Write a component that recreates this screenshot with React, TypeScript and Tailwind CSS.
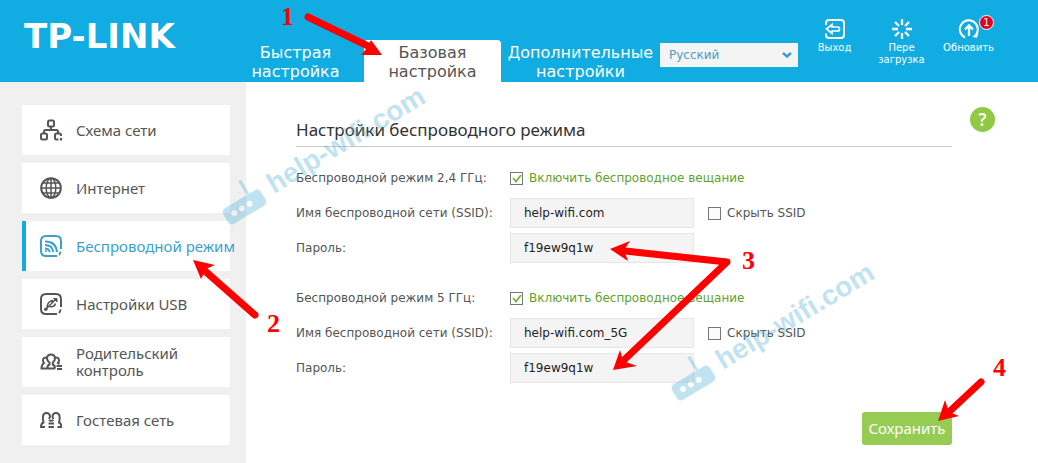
import { useState } from "react";
import type { ReactNode } from "react";

type IconProps = { children: ReactNode };

const MenuIcon = ({ children }: IconProps) => (
  <svg viewBox="0 0 22 22" className="w-[22px] h-[22px] shrink-0" fill="none" stroke="currentColor" strokeWidth="2">
    {children}
  </svg>
);

const ToolIcon = ({ children }: IconProps) => (
  <svg viewBox="0 0 22 22" className="w-[22px] h-[22px]" fill="none" stroke="currentColor" strokeWidth="2">
    {children}
  </svg>
);

const menu = [
  {
    id: "map",
    label: "Схема сети",
    icon: (
      <>
        <rect x="8" y="1.5" width="6" height="6" rx="1.5" />
        <path d="M11 8v3M4 14v-1.5q0-1.5 1.5-1.5h11q1.5 0 1.5 1.5V14" />
        <rect x="1" y="14.5" width="6" height="6" rx="1.5" />
        <path d="M21 17v-1q0-1.500-1.500-1.500h-3q-1.500 0-1.500 1.500v3q0 1.500 1.500 1.500h2M21 19v2.500" />
      </>
    ),
  },
  {
    id: "internet",
    label: "Интернет",
    icon: (
      <>
        <circle cx="11" cy="11" r="9.8" />
        <ellipse cx="11" cy="11" rx="4.8" ry="9.8" strokeWidth="1.5" />
        <path d="M11 1v20M1.5 11h19M3 6h16M3 16h16" strokeWidth="1.5" />
      </>
    ),
  },
  {
    id: "wireless",
    label: "Беспроводной режим",
    icon: (
      <>
        <path d="M21 14V6q0-5-5-5H6Q1 1 1 6v10q0 5 5 5h11M20.500 16.500q-.3 2.500-1.500 3.500" />
        <path d="M5 6.500q11 0 12 10.500M5 10q7.500 0 8.300 7M5 13.500q4 0 4.800 3.500" />
        <circle cx="6" cy="16" r="1" fill="currentColor" stroke="none" />
      </>
    ),
  },
  {
    id: "usb",
    label: "Настройки USB",
    icon: (
      <>
        <path d="M21 14V6q0-5-5-5H6Q1 1 1 6v10q0 5 5 5h11M20.500 16.500q-.3 2.500-1.500 3.500" />
        <path d="M5.500 16.500 16 6M7 14q1-6 5-6M9.500 13.500q5 1 6-3" strokeWidth="1.500" />
        <path d="M13.500 5.500h3.500v3.500z" fill="currentColor" strokeWidth="1" />
        <circle cx="5.8" cy="16.2" r="1.8" fill="currentColor" stroke="none" />
        <circle cx="12" cy="8" r="1.3" fill="currentColor" stroke="none" />
      </>
    ),
  },
  {
    id: "parental",
    label: "Родительский контроль",
    icon: (
      <>
        <path d="M7.500 17.500Q7 14.500 9.500 13.500V11.500Q7 10 7 7 7.500 3.500 11 3.500T15 7Q15 10 12.800 11.500v2q2.200 1 2.200 4" />
        <path d="M7 6.500q-4-.5-4 3 0 1.500 1 2.500-2.500 1.500-2.500 5.500H15" />
        <path d="M15 6.500q4-.5 4 3 0 1.500-1 2.500l1.500 1M16.500 15H22M17 18h5" />
      </>
    ),
  },
  {
    id: "guest",
    label: "Гостевая сеть",
    icon: (
      <>
        <path d="M5 18H1q0-3.500 2.500-4.500Q2.500 10 3 7q.5-3 3.500-3T10 7q0 1.500-1 3" />
        <path d="M17.500 18h4q0-3.500-2.500-4.500 1-3.500.5-6.500-.5-3-3.500-3t-3.500 3q0 1.500 1 3" />
        <path d="M9 11q2 1.500 4.500 0M8.500 14.500h5.500M8.500 18h5.500" />
      </>
    ),
  },
];

const Header = () => (
  <header className="flex items-start min-h-[82px] bg-[#11ace2] font-['DejaVu_Sans',sans-serif] text-white">
    <a href="#home" className="w-[227px] shrink-0 pl-6 pt-[18px] text-[34px] leading-9 font-bold">
      TP-LINK
    </a>
    <nav className="flex pt-10 shrink-0 text-base leading-[19px] text-center">
      <a href="#quick" className="w-[137px] h-[42px] pt-[3px]">Быстрая<br />настройка</a>
      <a href="#basic" className="w-[137px] h-[42px] pt-[3px] rounded-t-[4px] bg-white text-[#555]">Базовая<br />настройка</a>
      <a href="#advanced" className="w-[159px] h-[42px] pt-[3px]">Дополнительные<br />настройки</a>
    </nav>
    <div className="relative mt-[42px] w-[138px] shrink-0">
      <select
        aria-label="Язык"
        className="w-full h-6 pl-[9px] appearance-none bg-[#f4f4f4] text-xs text-[#4d9cc5] outline-none"
      >
        <option>Русский</option>
      </select>
      <svg viewBox="0 0 10 6" className="absolute right-[6px] top-[10px] w-[10px] h-[6px] pointer-events-none" fill="none" stroke="#3b9fcb" strokeWidth="2.5">
        <path d="M1 1l4 3.500L9 1" />
      </svg>
    </div>
    <div className="flex ml-auto pr-9 pt-[18px] text-[10px] leading-3">
      <button className="flex flex-col items-center w-[67px]">
        <ToolIcon>
          <path d="M2 7V5q0-3 3-3h12q3 0 3 3v12q0 3-3 3H5q-3 0-3-3v-1.500" />
          <path d="M2.500 11 8 6.500V9h6q1.500 0 1.500 2T14 13H8v2.500z" strokeWidth="1.7" />
        </ToolIcon>
        <span className="mt-[2px]">Выход</span>
      </button>
      <button className="flex flex-col items-center w-[67px]">
        <ToolIcon>
          <path d="M11 1v6M11 15v6M1 11h6M15 11h6M4 4l4 4M14 14l4 4M18 4l-4 4M8 14l-4 4" strokeWidth="2.3" />
        </ToolIcon>
        <span className="mt-[2px]">Пере<br />загрузка</span>
      </button>
      <button className="relative flex flex-col items-center w-[67px]">
        <ToolIcon>
          <path d="M7 19.500A9 9 0 1 1 15.500 19M19.500 15.500 18 19.500" />
          <path d="M11 18V8M7 11.500l4-4 4 4" strokeWidth="2.3" />
        </ToolIcon>
        <span className="mt-[2px]">Обновить</span>
        <span className="absolute -top-[3px] right-[8px] w-[15px] h-[15px] rounded-full border border-white bg-[#e2001c] text-[10px] leading-[13px]">
          1
        </span>
      </button>
    </div>
  </header>
);

const Sidebar = () => {
  const [active, setActive] = useState("wireless");

  return (
    <aside className="w-[246px] shrink-0 bg-[#f0f0f0] pl-[22px] pr-4 pt-[23px]">
      <ul className="flex flex-col gap-2">
        {menu.map((item) => (
          <li key={item.id}>
            <button
              onClick={() => setActive(item.id)}
              className={`flex items-center gap-[14px] w-full h-[50px] pl-[14px] border-l-4 bg-white text-left text-[15px] leading-[17px] ${
                active === item.id ? "border-[#11ace2] text-[#3c9fd0]" : "border-white text-[#555]"
              }`}
            >
              <MenuIcon>{item.icon}</MenuIcon>
              <span className={item.id === "parental" ? "w-[110px]" : "whitespace-nowrap"}>{item.label}</span>
            </button>
          </li>
        ))}
      </ul>
    </aside>
  );
};

type BandProps = { id: string; title: string; ssid: string };

const Band = ({ id, title, ssid }: BandProps) => (
  <section className="grid grid-cols-[214px_184px_1fr] gap-y-[5px] items-center font-['DejaVu_Sans',sans-serif] text-xs text-[#555]">
    <span>{title}</span>
    <label className="col-span-2 flex items-center gap-[6px] h-[30px] text-[#5fa22c]">
      <input type="checkbox" defaultChecked className="peer sr-only" />
      <svg viewBox="0 0 13 13" className="w-[13px] h-[13px] peer-not-checked:[&>path]:hidden" fill="none">
        <rect x=".5" y=".5" width="12" height="12" fill="#fff" stroke="#777" />
        <path d="M3 6l3 3.500L11 3" stroke="#73b336" strokeWidth="1.8" />
      </svg>
      Включить беспроводное вещание
    </label>

    <label htmlFor={`${id}-ssid`}>Имя беспроводной сети (SSID):</label>
    <input
      id={`${id}-ssid`}
      defaultValue={ssid}
      className="w-full h-[30px] px-[13px] border border-[#e6e6e6] bg-[#f4f4f4] text-[#222] outline-none"
    />
    <label className="flex items-center gap-[6px] pl-[14px]">
      <input type="checkbox" className="appearance-none w-[13px] h-[13px] border border-[#777] bg-[#fbfbfb] checked:bg-[#73b336]" />
      Скрыть SSID
    </label>

    <label htmlFor={`${id}-pass`}>Пароль:</label>
    <input
      id={`${id}-pass`}
      defaultValue="f19ew9q1w"
      className="w-full h-[30px] px-[13px] border border-[#e6e6e6] bg-[#f4f4f4] text-[#222] outline-none"
    />
  </section>
);

const Watermark = ({ x, y }: { x: number; y: number }) => (
  <g transform={`translate(${x} ${y}) rotate(-31)`} fill="#4aaed8" opacity=".34">
    <path d="M5 -4h34q5 0 5 5v8q0 5-5 5H5q-5 0-5-5V1q0-5 5-5zM10 2a3 3 0 1 0 .1 0zM19 2a3 3 0 1 0 .1 0zM28 2a3 3 0 1 0 .1 0z" fillRule="evenodd" />
    <path d="M30 -4v-16h3v16z" />
    <text x="54" y="9" fontSize="28" fontWeight="700" fontFamily="Liberation Sans, sans-serif">help-wifi.com</text>
  </g>
);

// Step numbers and arrows of the guide, laid over the page
const GuideOverlay = () => (
  <svg viewBox="0 0 1038 463" className="absolute left-0 top-0 w-[1038px] h-[463px] pointer-events-none">
    <Watermark x={223} y={214} />
    <Watermark x={672} y={390} />
    <g stroke="#f00" strokeWidth="7" strokeLinecap="round" strokeLinejoin="round" fill="none">
      <path d="M308 17 368 46" />
      <path d="M255 315 205 271" />
      <path d="M625 251 727 262 624 360" />
      <path d="M981 382 950 411" />
    </g>
    <g fill="#f00">
      <path d="M382 55 361 55 367 48 371 40z" />
      <path d="M193 260 215 265 206 269 201 279z" />
      <path d="M610 249 630 241 624 250 628 261z" />
      <path d="M613 370 620 350 623 361 637 366z" />
      <path d="M938 421 945 400 949 412 959 416z" />
    </g>
    <g fill="#f00" fontSize="26" fontWeight="700" fontFamily="Liberation Serif, serif">
      <text x="281" y="25">1</text>
      <text x="267" y="332">2</text>
      <text x="742" y="269">3</text>
      <text x="993" y="376">4</text>
    </g>
  </svg>
);

export default function App() {
  return (
    <div className="relative flex flex-col min-h-screen overflow-hidden bg-white font-['Noto_Sans',sans-serif]">
      <Header />
      <div className="flex flex-1">
        <Sidebar />
        <main className="flex flex-1 pl-[50px] pr-[43px] gap-[18px]">
          <form className="flex-1 pt-9" onSubmit={(e) => e.preventDefault()}>
            <h1 className="h-[29px] border-b border-[#c8c8c8] text-[17px] leading-6 text-[#333]">
              Настройки беспроводного режима
            </h1>
            <div className="flex flex-col gap-5 pt-4">
              <Band id="g24" title="Беспроводной режим 2,4 ГГц:" ssid="help-wifi.com" />
              <Band id="g5" title="Беспроводной режим 5 ГГц:" ssid="help-wifi.com_5G" />
            </div>
            <div className="flex justify-end pt-[29px]">
              <button type="submit" className="w-[90px] h-[33px] rounded-[3px] bg-[#96cb54] text-[15px] text-white">
                Сохранить
              </button>
            </div>
          </form>
          <button aria-label="Справка" className="mt-[25px] w-[25px] h-[25px] shrink-0 rounded-full bg-[#90c944] text-[17px] font-semibold leading-[25px] text-white">
            ?
          </button>
        </main>
      </div>
      <GuideOverlay />
    </div>
  );
}
